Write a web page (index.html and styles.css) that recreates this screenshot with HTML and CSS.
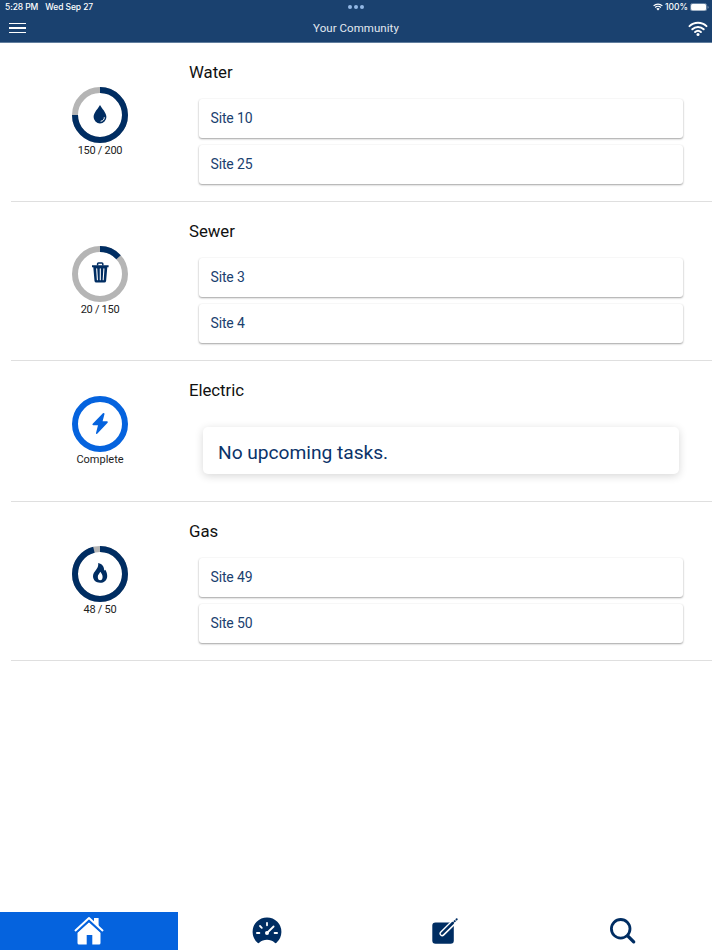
FILE: index.html
```html
<!DOCTYPE html>
<html lang="en">
<head>
<meta charset="utf-8">
<title>Your Community</title>
<link rel="stylesheet" href="styles.css">
</head>
<body>
<header class="header">
  <div class="status">
    <div class="status-left"><span class="time">5:28 PM</span><span class="date">Wed Sep 27</span></div>
    <div class="dots"><i></i><i></i><i></i></div>
    <div class="status-right">
      <svg class="wifi-small" viewBox="0 0 20 15"><path d="M1.2 5.2a12.6 12.6 0 0 1 17.6 0M4.3 8.4a8.1 8.1 0 0 1 11.4 0" fill="none" stroke="#fff" stroke-width="2.5"/><path d="M6.6 11.1a4.8 4.8 0 0 1 6.8 0L10 14.5z" fill="#fff"/></svg>
      <span class="percent">100%</span>
      <svg class="battery" viewBox="0 0 18 8"><rect x=".4" y=".4" width="15.4" height="7.2" rx="2" fill="none" stroke="#8ca3bd" stroke-width=".7"/><rect x="1" y="1" width="14.2" height="6" rx="1.4" fill="#fff"/><path d="M16.8 2.7c1 .4 1 2.2 0 2.6z" fill="#a6b7ca"/></svg>
    </div>
  </div>
  <div class="navbar">
    <div class="menu"><i></i><i></i><i></i></div>
    <h1 class="title">Your Community</h1>
    <svg class="wifi-large" viewBox="0 0 20 15"><g fill="none" stroke="#fff" stroke-width="2" stroke-linecap="round"><path d="M1.5 5.1a12.3 12.3 0 0 1 17 0M4.3 8.2a8.2 8.2 0 0 1 11.4 0M7.1 11a4.3 4.3 0 0 1 5.8 0"/></g><circle cx="10" cy="13.4" r="1.5" fill="#fff"/></svg>
  </div>
</header>
<main class="main">
  <section class="row">
    <div class="gauge">
      <svg class="ring" viewBox="0 0 56 56"><circle class="track" cx="28" cy="28" r="25"/><circle class="value" cx="28" cy="28" r="25" pathLength="100" stroke-dasharray="75 100"/>
        <path class="glyph" d="M28 18c1.800 3.600 6.400 7.400 6.400 12a6.400 6.400 0 0 1-12.800 0c0-4.600 4.600-8.400 6.400-12z"/><path d="M32.300 30.600c0 2.100-1.200 3.300-3.300 3.600" fill="none" stroke="#fff" stroke-width="1" stroke-linecap="round"/></svg>
      <span class="count">150 / 200</span>
    </div>
    <div class="details"><h2 class="heading">Water</h2><div class="cards"><div class="card">Site 10</div><div class="card">Site 25</div></div></div>
  </section>
  <section class="row">
    <div class="gauge">
      <svg class="ring" viewBox="0 0 56 56"><circle class="track" cx="28" cy="28" r="25"/><circle class="value" cx="28" cy="28" r="25" pathLength="100" stroke-dasharray="13.3 100"/>
        <path d="M25.600 19.500v-1.700q0-.9.9-.9h3.400q.9 0 .9.900v1.700" fill="none" stroke="#002d62" stroke-width="1.500"/><path class="glyph" d="M20 19.200h16.600v2.100h-1.300l-1.200 13.700q-.2 1.600-1.800 1.600h-8q-1.600 0-1.800-1.600l-1.200-13.700h-1.300z"/><path d="M24.700 22.700l.7 11M28.300 22.700v11M31.900 22.700l-.7 11" fill="none" stroke="#fff" stroke-width="1.100" stroke-linecap="round"/></svg>
      <span class="count">20 / 150</span>
    </div>
    <div class="details"><h2 class="heading">Sewer</h2><div class="cards"><div class="card">Site 3</div><div class="card">Site 4</div></div></div>
  </section>
  <section class="row row-done">
    <div class="gauge gauge-done">
      <svg class="ring" viewBox="0 0 56 56"><circle class="value" cx="28" cy="28" r="25"/>
        <path class="glyph" d="M30.900 17.200L20.700 27.700q-.9 1.300.5 1.500h4.800l-2 7.900q0 1.500 1.200.6L35.600 26.700q.8-1.300-.6-1.500h-4.400l1.900-7.200q0-1.500-1.600-.8z"/></svg>
      <span class="count complete">Complete</span>
    </div>
    <div class="details"><h2 class="heading">Electric</h2><div class="empty">No upcoming tasks.</div></div>
  </section>
  <section class="row">
    <div class="gauge">
      <svg class="ring" viewBox="0 0 56 56"><circle class="track" cx="28" cy="28" r="25"/><circle class="value" cx="28" cy="28" r="25" pathLength="100" stroke-dasharray="96 100"/>
        <path class="glyph" d="M26.200 17c4.200 1 6 3.900 6 7.600.5-.2.800-.5 1.100-.8 1.200 1.800 1.900 3.900 1.900 6.100 0 4.100-3 6.900-7.100 6.900S21 34 21 30.300c0-5.200 6.100-7.300 5.200-13.300z"/><path d="M28.300 25.800c1.300 1.900 2.300 3.300 2.300 5.200 0 2-.9 3.300-2.400 3.300S25.800 33 25.800 31c0-1.900 1.300-3.200 2.500-5.200z" fill="#fff"/></svg>
      <span class="count">48 / 50</span>
    </div>
    <div class="details"><h2 class="heading">Gas</h2><div class="cards"><div class="card">Site 49</div><div class="card">Site 50</div></div></div>
  </section>
</main>
<nav class="tabs">
  <div class="tab active"><svg class="icon" viewBox="0 0 30 30"><path d="M3.500 16.700L15 6.300l11.500 10.400v10.200q0 1.500-1.500 1.500h-6.700v-9.400h-5.600v9.400H5q-1.500 0-1.500-1.500z" fill="#fff"/><path d="M1.800 15.500L15 3.700l13.200 11.800" fill="none" stroke="#0563de" stroke-width="3.400"/><path d="M20 2h4.600v9.200L20 7z" fill="#fff"/><path d="M1.500 14.400L15 2.100l13.500 12.300" fill="none" stroke="#fff" stroke-width="2" stroke-linecap="round" stroke-linejoin="round"/></svg></div>
  <div class="tab"><svg class="icon" viewBox="0 0 30 30"><path d="M5.300 26.500A14.400 14.400 0 1 1 24.700 26.500q-1 1.200-2.200.1c-3.700-3.700-11.300-3.700-15 0q-1.200 1.100-2.200-.1z" fill="#002d62"/><g stroke="#fff" stroke-width="1.800" stroke-linecap="round" fill="none"><path d="M4.900 17h2.500M22.600 17h2.500M15 6.800v2.500M8 10l1.800 1.800M15 17l6.600-6.500"/></g><circle cx="15" cy="17" r="2" fill="#fff"/></svg></div>
  <div class="tab"><svg class="icon" viewBox="0 0 30 30"><rect x="2.300" y="6.500" width="21.500" height="21.300" rx="3.200" fill="#002d62"/><path d="M12.300 17.500L23.500 6.600" stroke="#fff" stroke-width="5.600" stroke-linecap="round"/><path d="M12 17.700L22.800 7" stroke="#002d62" stroke-width="2.500" stroke-linecap="round"/><path d="M24.600 5.300l.2-.2M26.500 3.500l.2-.2" stroke="#002d62" stroke-width="2" stroke-linecap="round"/></svg></div>
  <div class="tab"><svg class="icon" viewBox="0 0 30 30"><g fill="none" stroke="#002d62"><circle cx="12.700" cy="12.800" r="9.300" stroke-width="2.800"/><path d="M19.700 19.800l6 6" stroke-width="3.300" stroke-linecap="round"/></g></svg></div>
</nav>
</body>
</html>
```
FILE: styles.css
```css
* { box-sizing: border-box; }
body {
  margin: 0;
  height: 950px;
  display: flex;
  flex-direction: column;
  overflow: hidden;
  background: #fff;
  font-family: Roboto, "Liberation Sans", sans-serif;
}
h1, h2 { margin: 0; font-weight: 400; }
svg { display: block; flex: none; }
.header {
  height: 43px;
  flex: none;
  background: #1a416f;
  border-bottom: 1px solid #617e9e;
  color: #fff;
}
.status {
  height: 14px;
  display: grid;
  grid-template-columns: 1fr auto 1fr;
  align-items: center;
  padding: 0 5px;
  font: 500 8.5px/14px Inter, sans-serif;
}
.status-left { display: flex; gap: 7px; }
.time { letter-spacing: -0.1px; }
.date { letter-spacing: -0.08px; }
.dots { display: flex; gap: 1.7px; }
.dots i { width: 4px; height: 4px; border-radius: 50%; background: #93b8e5; }
.status-right { display: flex; justify-content: flex-end; align-items: center; gap: 2px; margin-right: -2px; }
.wifi-small { width: 10px; height: 8px; }
.battery { width: 19px; height: 8.5px; }
.navbar {
  height: 28px;
  display: grid;
  grid-template-columns: 1fr auto 1fr;
  align-items: center;
  padding: 0 9px;
}
.menu { display: grid; gap: 3px; width: 17px; }
.menu i { height: 1.4px; background: #fff; }
.title { color: #e2e9f1; font-size: 11.5px; line-height: 28px; letter-spacing: 0.05px; }
.wifi-large { width: 20px; height: 15px; justify-self: end; margin-right: -5px; }
.main { flex: 1; }
.row {
  height: 159px;
  margin-left: 11px;
  display: flex;
  border-bottom: 1px solid #dfdfdf;
}
.row-done { height: 141px; }
.gauge {
  width: 178px;
  display: flex;
  flex-direction: column;
  align-items: center;
  justify-content: center;
}
.ring { width: 56px; height: 56px; }
.track, .value { fill: none; stroke-width: 6; }
.track { stroke: #b5b5b5; }
.value { stroke: #002d62; transform: rotate(-90deg); transform-origin: 28px 28px; }
.glyph { fill: #002d62; }
.gauge-done .value { stroke: #0563de; }
.gauge-done .glyph { fill: #0563de; }
.count { height: 14px; color: #222; font-size: 11px; line-height: 15px; letter-spacing: -0.28px; }
.complete { letter-spacing: 0; }
.details { flex: 1; padding: 18px 29px 0 0; }
.heading { height: 22px; color: #111; font-size: 16.8px; line-height: 22px; letter-spacing: -0.05px; }
.cards { display: grid; gap: 7px; margin: 16px 0 0 10px; }
.card {
  height: 39px;
  padding-left: 11.5px;
  border-radius: 3px;
  background: #fff;
  box-shadow: 0 1px 2px rgba(0,0,0,.36), 0 0 2px rgba(0,0,0,.05);
  color: #1a416f;
  font-size: 14px;
  line-height: 39px;
  letter-spacing: -0.15px;
}
.empty {
  height: 47px;
  margin: 26px 4px 0 14px;
  padding-left: 15px;
  border-radius: 5px;
  box-shadow: 0 2px 9px rgba(0,0,0,.16);
  color: #0b3369;
  font-size: 19.2px;
  line-height: 51px;
  letter-spacing: -0.03px;
}
.tabs { height: 38px; flex: none; display: grid; grid-template-columns: repeat(4, 1fr); }
.tab { display: flex; align-items: center; justify-content: center; }
.active { background: #0563de; }
.icon { width: 30px; height: 30px; }
```
